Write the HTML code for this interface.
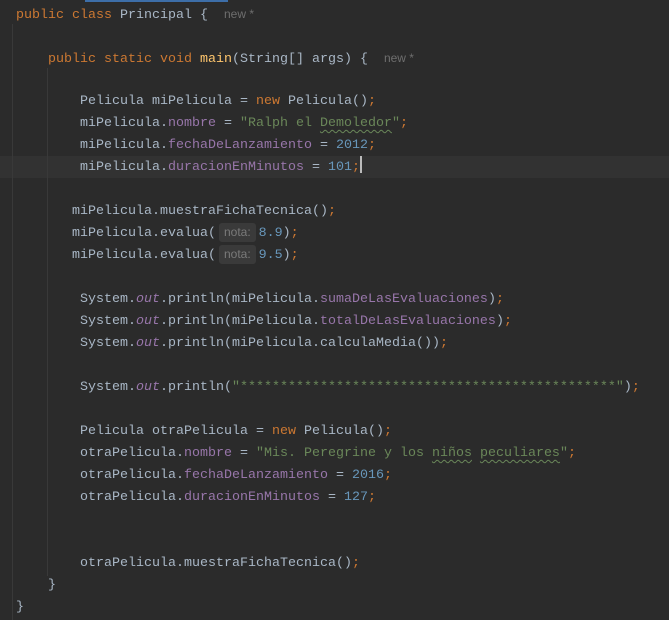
<!DOCTYPE html>
<html><head><meta charset="utf-8"><style>
html,body{margin:0;padding:0;background:#2b2b2b;width:669px;height:620px;overflow:hidden;position:relative}
.l{position:absolute;left:0;height:22px;line-height:24px;font-family:"Liberation Mono",monospace;font-size:13.33px;color:#a9b7c6;white-space:pre}
.k{color:#cc7832}.f{color:#9876aa}.s{color:#6a8759}.n{color:#6897bb}.i{font-style:italic;color:#9876aa}.m{color:#ffc66d}
.h{display:inline-block;font-family:"Liberation Sans",sans-serif;font-size:12px;color:#7a7a7a;background:#3a3a3a;border-radius:3px;height:19px;line-height:19px;padding:0 5px;margin:0 3px 0 3px;vertical-align:0px}
.nw{font-family:"Liberation Sans",sans-serif;font-size:12px;color:#6e6e6e}
.w{text-decoration:underline wavy #6a8759;text-underline-offset:3px;text-decoration-thickness:1px}
.g{position:absolute;width:1px;background:#393939}
</style></head><body>
<div style="position:absolute;left:85px;top:0;width:143px;height:2px;background:#3d6ea8"></div>
<div style="position:absolute;left:0;top:156px;width:669px;height:22px;background:#323232"></div>
<div class="g" style="left:12px;top:24px;height:596px"></div>
<div class="g" style="left:47px;top:68px;height:508px"></div>
<div class="l" style="top:2px;left:16px"><span class="k">public class</span> Principal {  <span class="nw">new *</span></div>
<div class="l" style="top:46px;left:48px"><span class="k">public static void</span> <span class="m">main</span>(String[] args) {  <span class="nw">new *</span></div>
<div class="l" style="top:90px;left:80px">Pelicula miPelicula = <span class="k">new</span> Pelicula()<span class="k">;</span></div>
<div class="l" style="top:112px;left:80px">miPelicula.<span class="f">nombre</span> = <span class="s">"Ralph el <span class="w">Demoledor</span>"</span><span class="k">;</span></div>
<div class="l" style="top:134px;left:80px">miPelicula.<span class="f">fechaDeLanzamiento</span> = <span class="n">2012</span><span class="k">;</span></div>
<div class="l" style="top:156px;left:80px">miPelicula.<span class="f">duracionEnMinutos</span> = <span class="n">101</span><span class="k">;</span><span style="display:inline-block;width:2px;height:17px;background:#bbb;vertical-align:-3px"></span></div>
<div class="l" style="top:200px;left:72px">miPelicula.muestraFichaTecnica()<span class="k">;</span></div>
<div class="l" style="top:222px;left:72px">miPelicula.evalua(<span class="h">nota:</span><span class="n">8.9</span>)<span class="k">;</span></div>
<div class="l" style="top:244px;left:72px">miPelicula.evalua(<span class="h">nota:</span><span class="n">9.5</span>)<span class="k">;</span></div>
<div class="l" style="top:288px;left:80px">System.<span class="i">out</span>.println(miPelicula.<span class="f">sumaDeLasEvaluaciones</span>)<span class="k">;</span></div>
<div class="l" style="top:310px;left:80px">System.<span class="i">out</span>.println(miPelicula.<span class="f">totalDeLasEvaluaciones</span>)<span class="k">;</span></div>
<div class="l" style="top:332px;left:80px">System.<span class="i">out</span>.println(miPelicula.calculaMedia())<span class="k">;</span></div>
<div class="l" style="top:376px;left:80px">System.<span class="i">out</span>.println(<span class="s">"***********************************************"</span>)<span class="k">;</span></div>
<div class="l" style="top:420px;left:80px">Pelicula otraPelicula = <span class="k">new</span> Pelicula()<span class="k">;</span></div>
<div class="l" style="top:442px;left:80px">otraPelicula.<span class="f">nombre</span> = <span class="s">"Mis. Peregrine y los <span class="w">niños</span> <span class="w">peculiares</span>"</span><span class="k">;</span></div>
<div class="l" style="top:464px;left:80px">otraPelicula.<span class="f">fechaDeLanzamiento</span> = <span class="n">2016</span><span class="k">;</span></div>
<div class="l" style="top:486px;left:80px">otraPelicula.<span class="f">duracionEnMinutos</span> = <span class="n">127</span><span class="k">;</span></div>
<div class="l" style="top:552px;left:80px">otraPelicula.muestraFichaTecnica()<span class="k">;</span></div>
<div class="l" style="top:574px;left:48px">}</div>
<div class="l" style="top:596px;left:16px">}</div>
</body></html>
